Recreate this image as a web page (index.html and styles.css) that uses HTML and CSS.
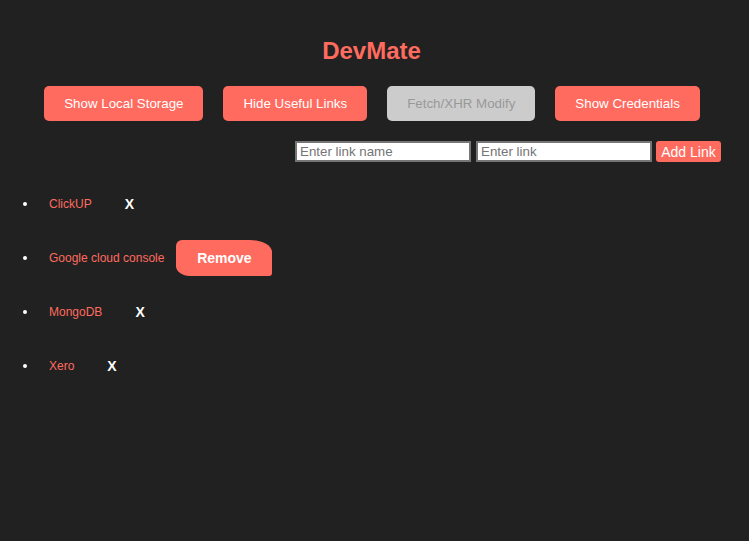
FILE: index.html
```html
<!DOCTYPE html>
<html>
<head>
<meta charset="utf-8">
<link rel="stylesheet" href="styles.css">
</head>
<body>
<h1 class="title">DevMate</h1>
<div class="actions">
  <button class="btn">Show Local Storage</button>
  <button class="btn">Hide Useful Links</button>
  <button class="btn btn-disabled" disabled>Fetch/XHR Modify</button>
  <button class="btn">Show Credentials</button>
</div>
<div class="add-row">
  <input class="field" type="text" placeholder="Enter link name">
  <input class="field field-second" type="text" placeholder="Enter link">
  <button class="add-btn">Add Link</button>
</div>
<ul class="links">
  <li class="link-item"><a class="link" href="#">ClickUP</a><button class="x-btn">X</button></li>
  <li class="link-item"><a class="link" href="#">Google cloud console</a><button class="remove-btn">Remove</button></li>
  <li class="link-item"><a class="link" href="#">MongoDB</a><button class="x-btn">X</button></li>
  <li class="link-item"><a class="link" href="#">Xero</a><button class="x-btn">X</button></li>
</ul>
</body>
</html>
```
FILE: styles.css
```css
html, body {
  background: #212121;
}
body {
  margin: 0;
  font-family: "Liberation Sans", Arial, sans-serif;
  color: #fff;
}
.title {
  margin: 0;
  padding-top: 37px;
  padding-right: 6px;
  line-height: 28px;
  font-size: 24px;
  font-weight: bold;
  text-align: center;
  color: #ff6b5f;
}
.actions {
  display: flex;
  justify-content: center;
  gap: 20px;
  margin-top: 21px;
  padding-right: 5px;
}
.btn {
  height: 35px;
  padding: 0 20px;
  border: none;
  border-radius: 5px;
  background: #ff6b5f;
  color: #fff;
  font-family: "Liberation Sans", Arial, sans-serif;
  font-size: 13.333px;
}
.btn-disabled {
  background: #cccccc;
  color: #999999;
}
.add-row {
  display: flex;
  justify-content: flex-end;
  align-items: center;
  margin-top: 20px;
  padding-right: 28px;
}
.field {
  box-sizing: border-box;
  width: 176px;
  height: 21px;
  margin: 0;
  padding: 1px 3px;
  border: 2px solid #767676;
  background: #fff;
  font-family: "Liberation Sans", Arial, sans-serif;
  font-size: 13.333px;
  color: #000;
}
.field-second {
  margin-left: 5px;
}
.field::placeholder {
  color: #757575;
}
.add-btn {
  box-sizing: border-box;
  width: 65px;
  height: 21px;
  margin-left: 4px;
  padding: 0;
  border: none;
  border-radius: 3px;
  background: #ff6b5f;
  color: #fff;
  font-family: "Liberation Sans", Arial, sans-serif;
  font-size: 14px;
}
.links {
  margin: 23px 0 0 0;
  padding-left: 37px;
}
.link-item {
  height: 36px;
  line-height: 36px;
  margin-bottom: 18px;
  padding-left: 12px;
  font-size: 12px;
  color: #fff;
}
.link {
  color: #ff6b5f;
  text-decoration: none;
  vertical-align: middle;
}
.x-btn {
  vertical-align: middle;
  height: 36px;
  margin-left: 10px;
  padding: 0 23px;
  border: none;
  background: transparent;
  color: #fff;
  font-family: "Liberation Sans", Arial, sans-serif;
  font-size: 14px;
  font-weight: bold;
}
.remove-btn {
  vertical-align: middle;
  width: 96px;
  height: 36px;
  margin-left: 12px;
  padding: 0;
  border: none;
  border-radius: 6px 22px 3px 14px / 6px 12px 3px 10px;
  background: #ff6b5f;
  color: #fff;
  font-family: "Liberation Sans", Arial, sans-serif;
  font-size: 14px;
  font-weight: bold;
}
```
